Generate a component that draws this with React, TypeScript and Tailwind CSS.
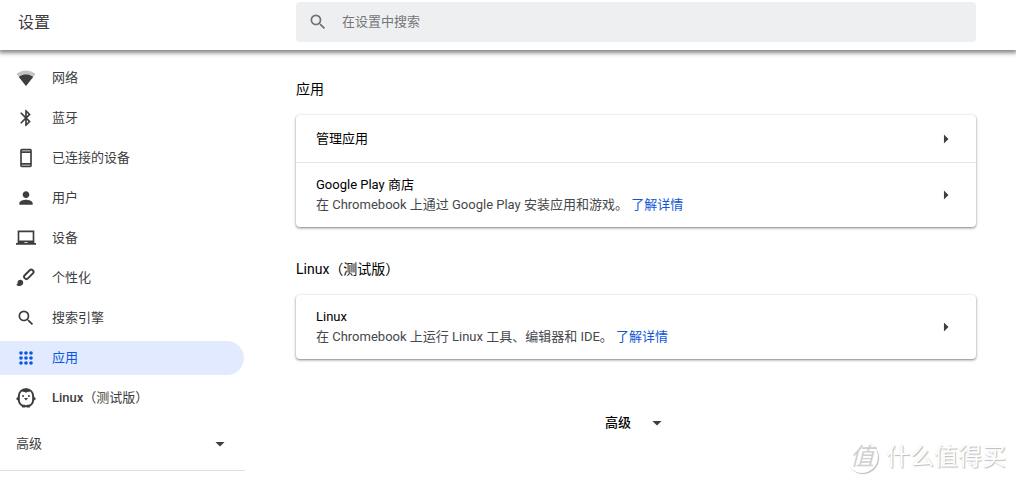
import { useState, type ReactNode } from 'react'

interface NavItem {
  id: string
  label: ReactNode
  icon: ReactNode
}

function Icon({ children, className = 'h-5 w-5' }: { children: ReactNode; className?: string }) {
  return (
    <svg viewBox="0 0 24 24" fill="currentColor" aria-hidden="true" className={`shrink-0 ${className}`}>
      {children}
    </svg>
  )
}

const searchPath =
  'M15.5 14h-.79l-.28-.27A6.471 6.471 0 0 0 16 9.5 6.5 6.5 0 1 0 9.5 16c1.61 0 3.09-.59 4.23-1.57l.27.28v.79l5 4.99L20.49 19l-4.99-5zm-6 0C7.01 14 5 11.99 5 9.5S7.01 5 9.5 5 14 7.01 14 9.5 11.99 14 9.5 14z'

const navItems: NavItem[] = [
  {
    id: 'network',
    label: '网络',
    icon: (
      <Icon>
        <path opacity=".3" d="M12 21.5 23.4 7.2C23 6.9 18.6 3 12 3S1 6.9 .6 7.2L12 21.5z" />
        <path d="M12 21.5 20.6 10.8C20.2 10.5 17 7.8 12 7.8s-8.2 2.7-8.6 3L12 21.5z" />
      </Icon>
    ),
  },
  {
    id: 'bluetooth',
    label: '蓝牙',
    icon: (
      <Icon>
        <path d="M17.71 7.71 12 2h-1v7.59L6.41 5 5 6.41 10.59 12 5 17.59 6.41 19 11 14.41V22h1l5.71-5.71-4.3-4.29 4.3-4.29zM13 5.83l1.88 1.88L13 9.59V5.83zm1.88 10.46L13 18.17v-3.76l1.88 1.88z" />
      </Icon>
    ),
  },
  {
    id: 'connected',
    label: '已连接的设备',
    icon: (
      <Icon>
        <path d="M17 1H7c-1.1 0-2 .9-2 2v18c0 1.1.9 2 2 2h10c1.1 0 2-.9 2-2V3c0-1.1-.9-2-2-2zm0 20H7v-1h10v1zm0-3H7V6h10v12zm0-14H7V3h10v1z" />
      </Icon>
    ),
  },
  {
    id: 'people',
    label: '用户',
    icon: (
      <Icon>
        <path d="M12 12c2.21 0 4-1.79 4-4s-1.79-4-4-4-4 1.79-4 4 1.79 4 4 4zm0 2c-2.67 0-8 1.34-8 4v2h16v-2c0-2.66-5.33-4-8-4z" />
      </Icon>
    ),
  },
  {
    id: 'device',
    label: '设备',
    icon: (
      <Icon>
        <path d="M22 18V3H2v15H0v2h24v-2h-2zm-8 0h-4v-1h4v1zm6-3H4V5h16v10z" />
      </Icon>
    ),
  },
  {
    id: 'personalization',
    label: '个性化',
    icon: (
      <Icon>
        <g transform="rotate(45 14.5 8.5)">
          <rect x="11.8" y="0.5" width="5.4" height="13.5" rx="2.5" fill="none" stroke="currentColor" strokeWidth="2.3" />
        </g>
        <path d="M5.2 14.2c-1.9 0-3.3 1.4-3.3 3.2 0 1.5-.6 2.3-1.7 2.7.9 1 2.4 1.5 4 1.5 2.5 0 4.5-1.7 4.5-4.1 0-1.9-1.6-3.3-3.5-3.3z" />
      </Icon>
    ),
  },
  {
    id: 'search',
    label: '搜索引擎',
    icon: (
      <Icon>
        <path d={searchPath} />
      </Icon>
    ),
  },
  {
    id: 'apps',
    label: '应用',
    icon: (
      <Icon>
        {[6, 12, 18].map((cy) => [6, 12, 18].map((cx) => <circle key={`${cx}-${cy}`} cx={cx} cy={cy} r="2.2" />))}
      </Icon>
    ),
  },
  {
    id: 'linux',
    label: (
      <span>
        <span className="font-medium">Linux</span>（测试版）
      </span>
    ),
    icon: (
      <Icon>
        <path
          d="M12 1.5c-5 0-8.6 3.5-8.6 8.500v4.500c0 4.300 3.400 7.500 8.600 7.500s8.600-3.200 8.600-7.500V10c0-5-3.600-8.500-8.600-8.500z"
          fill="none"
          stroke="currentColor"
          strokeWidth="2.4"
        />
        <path d="M7 2.5 12 .3l5 2.200-.5 2.100c-1.800 0-3.500.3-4.500 1.400-1-1.100-2.700-1.400-4.500-1.400z" />
        <path d="M3.5 9 0 13.200 3.500 16zM20.500 9l3.500 4.200-3.500 2.800z" />
        <path d="M6 20h5v3.500H7.500zM13 20h5l-1.500 3.500H13z" />
        <circle cx="8.500" cy="9.500" r="1.200" />
        <circle cx="15.500" cy="9.500" r="1.200" />
        <path d="M9.500 12h5L12 15z" />
      </Icon>
    ),
  },
]

function ArrowDown() {
  return (
    <Icon className="h-5 w-5 text-[#3c4043]">
      <path d="m6.5 9.5 5.5 5.5 5.5-5.5z" />
    </Icon>
  )
}

function ArrowRight() {
  return (
    <Icon className="h-5 w-5 text-[#3c4043]">
      <path d="m9.5 17.5 5.5-5.5-5.5-5.5z" />
    </Icon>
  )
}

function Section({ title, children }: { title: string; children: ReactNode }) {
  return (
    <section className="mb-4">
      <h2 className="mb-3 pt-3 text-sm leading-7">{title}</h2>
      <div className="divide-y divide-[#e6e6e6] rounded bg-white shadow-[0_1px_2px_0_rgba(60,64,67,0.5),0_1px_3px_1px_rgba(60,64,67,0.15)]">
        {children}
      </div>
    </section>
  )
}

function Row({ title, description }: { title: string; description?: string }) {
  return (
    <div className={`flex items-center justify-between px-5 ${description ? 'py-3' : 'h-12'}`}>
      <div>
        <h3 className="leading-5">{title}</h3>
        {description && (
          <p className="leading-5 text-[#46484c]">
            {description}{' '}
            <a href="#more" className="text-[#1155d6]">
              了解详情
            </a>
          </p>
        )}
      </div>
      <button type="button" aria-label={title}>
        <ArrowRight />
      </button>
    </div>
  )
}

export default function App() {
  const [active, setActive] = useState('apps')

  return (
    <div className="relative min-h-screen bg-white font-['Roboto','Noto_Sans_CJK_SC',sans-serif] text-[13px] text-black" lang="zh-CN">
      <header className="relative flex h-[50px] items-start shadow-[0_2px_4px_1px_rgba(60,55,50,0.6)]">
        <h1 className="w-64 shrink-0 pt-[11px] pl-[18px] text-base leading-6 text-[#3c3c3e]">设置</h1>
        <div className="flex-1 px-10 pt-0.5">
          <label className="flex h-10 items-center gap-3.5 rounded bg-[#eeeff1] px-3 text-[#6f7175]">
            <Icon>
              <path d={searchPath} />
            </Icon>
            <input
              type="text"
              aria-label="在设置中搜索"
              placeholder="在设置中搜索"
              className="min-w-0 flex-1 bg-transparent leading-5 outline-none placeholder:text-[#75777b]"
            />
          </label>
        </div>
      </header>

      <div className="flex">
        <aside className="w-64 shrink-0 pt-[11px] pr-[11px] text-[#3e3d40]">
          <nav className="flex flex-col gap-1.5">
            {navItems.map((item) => (
              <a
                key={item.id}
                href={`#${item.id}`}
                onClick={() => setActive(item.id)}
                className={`mr-px flex h-[34px] items-center gap-4 rounded-r-full pl-4 ${
                  item.id === active ? 'bg-[#e1eafe] text-[#0b57e3]' : ''
                }`}
              >
                {item.icon}
                {item.label}
              </a>
            ))}
          </nav>
          <button
            type="button"
            className="mt-0.5 flex h-[54px] w-full items-center justify-between border-b border-[#dfdfdf] pr-[15px] pl-4"
          >
            高级
            <ArrowDown />
          </button>
        </aside>

        <main className="flex-1 px-10 pt-[13px]">
          <Section title="应用">
            <Row title="管理应用" />
            <Row title="Google Play 商店" description="在 Chromebook 上通过 Google Play 安装应用和游戏。" />
          </Section>
          <Section title="Linux（测试版）">
            <Row title="Linux" description="在 Chromebook 上运行 Linux 工具、编辑器和 IDE。" />
          </Section>
          <button type="button" className="mx-auto mt-[54px] flex items-center gap-4 font-medium">
            高级
            <ArrowDown />
          </button>
        </main>
      </div>

      <div className="absolute right-2.5 bottom-2.5 flex items-center gap-2 text-white [text-shadow:1px_1px_1px_#bbb,0_0_1px_#ddd]">
        <span className="flex h-8 w-8 items-center justify-center rounded-full text-2xl leading-8 text-[#cfcfcf] italic shadow-[1px_1px_1px_#bbb] [text-shadow:none]">
          值
        </span>
        <span className="text-2xl leading-8">什么值得买</span>
      </div>
    </div>
  )
}
